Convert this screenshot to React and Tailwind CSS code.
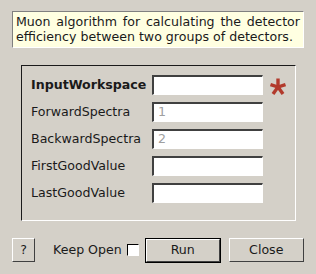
import React from 'react';

const fields = [
  { name: 'InputWorkspace', value: '', bold: true, required: true },
  { name: 'ForwardSpectra', value: '1' },
  { name: 'BackwardSpectra', value: '2' },
  { name: 'FirstGoodValue', value: '' },
  { name: 'LastGoodValue', value: '' },
];

function Star() {
  // five-armed red asterisk marking a mandatory property
  return (
    <svg width="16" height="17" viewBox="0 0 16 17">
      <g stroke="#b23a2c" strokeWidth="3.4" strokeLinecap="butt">
        <line x1="8" y1="9" x2="8" y2="0.5" />
        <line x1="8" y1="9" x2="0.5" y2="6.5" />
        <line x1="8" y1="9" x2="15.5" y2="6.5" />
        <line x1="8" y1="9" x2="3" y2="16" />
        <line x1="8" y1="9" x2="13" y2="16" />
      </g>
    </svg>
  );
}

function Field({ name, value, bold, required }) {
  return (
    <div className="flex h-[20px] items-center">
      <span className={`w-[121px] ${bold ? 'font-bold' : ''}`}>{name}</span>
      <div className="flex h-[20px] w-[111px] items-center border-t-2 border-l-2 border-b border-r border-t-[#404040] border-l-[#404040] border-b-white border-r-white bg-white px-[4px] text-[#a0a0a0]">
        {value}
      </div>
      {required && (
        <span className="ml-[7px] mt-[2px]">
          <Star />
        </span>
      )}
    </div>
  );
}

function Button({ children, width, isDefault }) {
  return (
    <div className={`${isDefault ? 'border border-black' : ''} ${width}`}>
      <div className="flex h-full w-full items-center justify-center border border-t-white border-l-white border-b-[#404040] border-r-[#404040] bg-[#d4d0c8]">
        {children}
      </div>
    </div>
  );
}

export default function App() {
  return (
    <div className="h-[274px] w-[316px] overflow-hidden bg-[#d4d0c8] text-[12.6px] text-[#1a1a1a] [font-family:'DejaVu_Sans',sans-serif]">
      <div className="ml-[12px] pt-[11px]">
        <div className="h-[37px] w-[292px] border border-t-[#808080] border-l-[#808080] border-b-white border-r-white bg-[#ffffe1] px-[3px] pt-[2px] text-justify leading-[15px]">
          Muon algorithm for calculating the detector efficiency between two groups of detectors.
        </div>
      </div>

      <div className="ml-[21px] mt-[17px] h-[156px] w-[275px] border border-t-[#1a1a1a] border-l-[#1a1a1a] border-b-white border-r-white">
        <div className="flex flex-col gap-[7px] pl-[9px] pt-[9px]">
          {fields.map((f) => (
            <Field key={f.name} {...f} />
          ))}
        </div>
      </div>

      <div className="ml-[12px] mt-[17px] flex h-[24px] items-center">
        <Button width="w-[23px] h-[24px]">?</Button>
        <span className="ml-[18px]">Keep Open</span>
        <span className="ml-[5px] h-[12px] w-[12px] border border-t-black border-l-black border-b-white border-r-white bg-white" />
        <span className="ml-[6px] h-[25px] w-[76px]">
          <Button width="w-[76px] h-[25px]" isDefault>Run</Button>
        </span>
        <span className="ml-[8px] h-[24px] w-[75px]">
          <Button width="w-[75px] h-[24px]">Close</Button>
        </span>
      </div>
    </div>
  );
}
